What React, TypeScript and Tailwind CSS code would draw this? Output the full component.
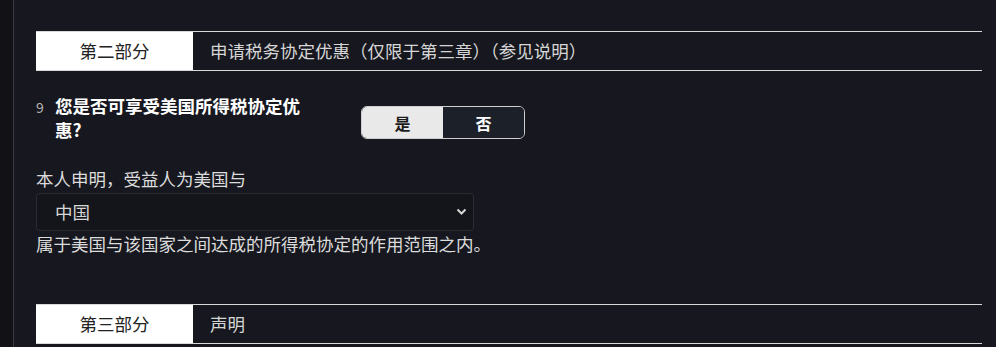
import { useState } from "react";

const font = {
  fontFamily: '"Noto Sans CJK SC", "Noto Sans", sans-serif',
};

const SectionHeader = ({ part, title }: { part: string; title: string }) => (
  <div className="flex h-[40px] border-y border-[#d9d9d9]">
    <div className="w-[157px] bg-white flex items-center justify-center text-[17.5px] text-[#222]">
      {part}
    </div>
    <div className="flex-1 flex items-center pl-[17px] text-[17.5px] text-[#d6d6d6]">
      {title}
    </div>
  </div>
);

export default function App() {
  const [treaty, setTreaty] = useState(true);

  return (
    <div className="flex h-[347px] w-full bg-[#17181f] overflow-hidden" style={font}>
      <div className="w-[14px] bg-[#111116] border-r border-[#3a3b42]" />
      <div className="flex-1 pl-[22px] pr-[14px] pt-[31px]">
        <SectionHeader part="第二部分" title="申请税务协定优惠（仅限于第三章）（参见说明）" />

        <div className="flex items-start mt-[23px]">
          <div className="w-[325px] flex items-baseline">
            <span className="text-[14px] text-[#b5b5b5] w-[19px]">9</span>
            <p className="w-[262px] text-[17.5px] leading-[24px] font-bold text-white">
              您是否可享受美国所得税协定优惠?
            </p>
          </div>
          <div className="flex h-[33px] w-[164px] mt-[12px] rounded-[6px] border border-[#cfcfcf] overflow-hidden">
            <button
              onClick={() => setTreaty(true)}
              className={`flex-1 text-[16px] font-bold ${treaty ? "bg-[#e9e9e9] text-[#1b1b1b]" : "bg-[#1c2029] text-white"}`}
            >
              是
            </button>
            <button
              onClick={() => setTreaty(false)}
              className={`flex-1 text-[16px] font-bold ${!treaty ? "bg-[#e9e9e9] text-[#1b1b1b]" : "bg-[#1c2029] text-white"}`}
            >
              否
            </button>
          </div>
        </div>

        <div className="mt-[25px] text-[17.5px] leading-[24px] text-[#dcdcdc]">本人申明，受益人为美国与</div>
        <div className="relative w-[438px] h-[38px] mt-[2px]">
          <select className="appearance-none w-full h-full rounded-[4px] border border-[#2a2b33] bg-[#14151b] pl-[18px] text-[17.5px] text-[#d6d6d6] outline-none">
            <option>中国</option>
          </select>
          <svg
            className="absolute right-[7px] top-[15px] pointer-events-none"
            width="11"
            height="8"
            viewBox="0 0 11 8"
            fill="none"
          >
            <path d="M1.5 1.5 L5.5 5.5 L9.5 1.5" stroke="#d6d6d6" strokeWidth="2" />
          </svg>
        </div>
        <div className="mt-[1px] text-[17.5px] leading-[24px] text-[#dcdcdc]">
          属于美国与该国家之间达成的所得税协定的作用范围之内。
        </div>

        <div className="mt-[48px]">
          <SectionHeader part="第三部分" title="声明" />
        </div>
      </div>
    </div>
  );
}
